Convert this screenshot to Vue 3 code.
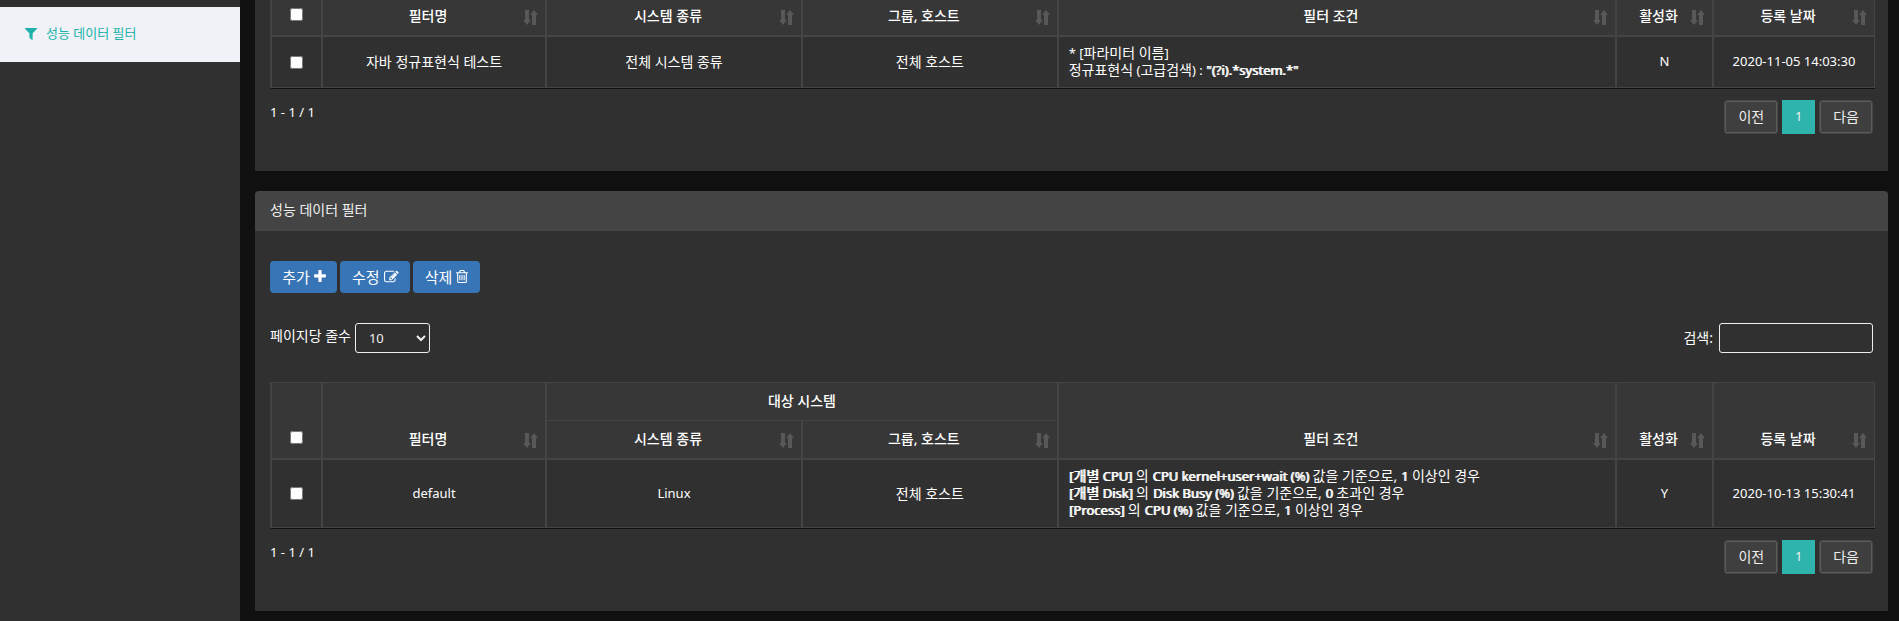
<script setup>
import { ref } from 'vue'

const pageSize = ref('10')
const keyword = ref('')

const columns = ['필터명', '시스템 종류', '그룹, 호스트', '필터 조건', '활성화', '등록 날짜']

const sortPath = 'M2 0h4v10h2l-4 5-4-5h2zM9 15h4V5h2l-4-5-4 5h2z'

const icons = {
  plus: {
    w: 12, h: 13, box: '192 128 1408 1536',
    d: 'M1600 736v192q0 40-28 68t-68 28h-416v416q0 40-28 68t-68 28h-192q-40 0-68-28t-28-68v-416h-416q-40 0-68-28t-28-68v-192q0-40 28-68t68-28h416v-416q0-40 28-68t68-28h192q40 0 68 28t28 68v416h416q40 0 68 28t28 68z'
  },
  edit: {
    w: 15, h: 13, box: '0 132 1824 1404',
    d: 'M888 1184l116-116-152-152-116 116v56h96v96h56zm440-720q-16-16-33 1l-350 350q-17 17-1 33t33-1l350-350q17-17 1-33zm80 594v190q0 119-84.5 203.5t-203.5 84.5h-832q-119 0-203.5-84.5t-84.5-203.5v-832q0-119 84.5-203.5t203.5-84.5h832q63 0 117 25 15 7 18 23 3 17-9 29l-49 49q-14 14-32 8-23-6-45-6h-832q-66 0-113 47t-47 113v832q0 66 47 113t113 47h832q66 0 113-47t47-113v-126q0-13 9-22l64-64q15-15 35-7t20 29zm-96-738l288 288-672 672h-288v-288zm444 132l-92 92-288-288 92-92q28-28 68-28t68 28l152 152q28 28 28 68t-28 68z'
  },
  trash: {
    w: 12, h: 13, box: '192 128 1408 1536',
    d: 'M704 736v576q0 14-9 23t-23 9h-64q-14 0-23-9t-9-23v-576q0-14 9-23t23-9h64q14 0 23 9t9 23zm256 0v576q0 14-9 23t-23 9h-64q-14 0-23-9t-9-23v-576q0-14 9-23t23-9h64q14 0 23 9t9 23zm256 0v576q0 14-9 23t-23 9h-64q-14 0-23-9t-9-23v-576q0-14 9-23t23-9h64q14 0 23 9t9 23zm128 724v-948h-896v948q0 22 7 40.5t14.5 27 10.5 8.5h832q3 0 10.5-8.5t14.5-27 7-40.5zm-672-1076h448l-48-117q-7-9-17-11h-317q-10 2-17 11zm928 32v64q0 14-9 23t-23 9h-96v948q0 83-47 143.5t-113 60.5h-832q-66 0-113-58.5t-47-141.5v-952h-96q-14 0-23-9t-9-23v-64q0-14 9-23t23-9h309l70-167q15-37 54-63t79-26h320q40 0 79 26t54 63l70 167h309q14 0 23 9t9 23z'
  }
}

const actions = [
  { label: '추가', icon: icons.plus },
  { label: '수정', icon: icons.edit },
  { label: '삭제', icon: icons.trash }
]

// k: Korean run, b: bold run
const panels = [
  {
    id: 'parameter',
    grouped: false,
    row: {
      name: '자바 정규표현식 테스트', system: '전체 시스템 종류', host: '전체 호스트', active: 'N', date: '2020-11-05 14:03:30',
      lines: [
        [{ t: '* [' }, { t: '파라미터 이름', k: true }, { t: ']' }],
        [{ t: '정규표현식', k: true }, { t: ' (' }, { t: '고급검색', k: true }, { t: ') : ' }, { t: '"(?i).*system.*"', b: true }]
      ]
    }
  },
  {
    id: 'performance',
    title: '성능 데이터 필터',
    grouped: true,
    row: {
      name: 'default', system: 'Linux', host: '전체 호스트', active: 'Y', date: '2020-10-13 15:30:41',
      lines: [
        [{ t: '[', b: true }, { t: '개별', k: true, b: true }, { t: ' CPU]', b: true }, { t: ' 의 ', k: true }, { t: 'CPU kernel+user+wait (%)', b: true }, { t: ' 값을 기준으로, ', k: true }, { t: '1', b: true }, { t: ' 이상인 경우', k: true }],
        [{ t: '[', b: true }, { t: '개별', k: true, b: true }, { t: ' Disk]', b: true }, { t: ' 의 ', k: true }, { t: 'Disk Busy (%)', b: true }, { t: ' 값을 기준으로, ', k: true }, { t: '0', b: true }, { t: ' 초과인 경우', k: true }],
        [{ t: '[Process]', b: true }, { t: ' 의 ', k: true }, { t: 'CPU (%)', b: true }, { t: ' 값을 기준으로, ', k: true }, { t: '1', b: true }, { t: ' 이상인 경우', k: true }]
      ]
    }
  }
]

const isKorean = (text) => /[가-힣]/.test(text)
</script>

<template>
  <div class="layout">
    <nav class="sidebar">
      <a href="#performance" class="nav-item">
        <svg width="12" height="12" viewBox="192 256 1408 1408" aria-hidden="true">
          <path d="M1595 295q17 41-14 70l-493 493v742q0 42-39 59-13 5-25 5-27 0-45-19l-256-256q-19-19-19-45v-486l-493-493q-31-29-14-70 17-39 59-39h1280q42 0 59 39z" />
        </svg>
        <span>성능 데이터 필터</span>
      </a>
    </nav>

    <main class="content">
      <section v-for="panel in panels" :id="panel.id" :key="panel.id" class="panel">
        <h2 v-if="panel.title" class="panel-title">{{ panel.title }}</h2>
        <div class="panel-body" :class="{ continued: !panel.title }">
          <template v-if="panel.title">
            <div class="actions">
              <button v-for="action in actions" :key="action.label" type="button" class="action">
                <span>{{ action.label }}</span>
                <svg :width="action.icon.w" :height="action.icon.h" :viewBox="action.icon.box" aria-hidden="true">
                  <path :d="action.icon.d" />
                </svg>
              </button>
            </div>
            <div class="controls">
              <div class="length">
                <label for="page-size">페이지당 줄수</label>
                <select id="page-size" v-model="pageSize">
                  <option>10</option>
                  <option>25</option>
                  <option>50</option>
                </select>
              </div>
              <div class="search">
                <label for="keyword">검색:</label>
                <input id="keyword" v-model="keyword" type="text">
              </div>
            </div>
          </template>

          <table :class="{ grouped: panel.grouped }">
            <colgroup>
              <col class="c-check">
              <col class="c-name">
              <col class="c-target">
              <col class="c-target">
              <col>
              <col class="c-active">
              <col class="c-date">
            </colgroup>
            <thead>
              <tr v-if="panel.grouped">
                <th rowspan="2" class="check"><input type="checkbox" aria-label="전체 선택"></th>
                <th rowspan="2">
                  <button type="button" class="sort">
                    <span>{{ columns[0] }}</span>
                    <svg width="15" height="15" viewBox="0 0 15 15" aria-hidden="true"><path :d="sortPath" /></svg>
                  </button>
                </th>
                <th colspan="2" class="group">대상 시스템</th>
                <th v-for="column in columns.slice(3)" :key="column" rowspan="2">
                  <button type="button" class="sort">
                    <span>{{ column }}</span>
                    <svg width="15" height="15" viewBox="0 0 15 15" aria-hidden="true"><path :d="sortPath" /></svg>
                  </button>
                </th>
              </tr>
              <tr>
                <th v-if="!panel.grouped" class="check"><input type="checkbox" aria-label="전체 선택"></th>
                <th v-for="column in panel.grouped ? columns.slice(1, 3) : columns" :key="column">
                  <button type="button" class="sort">
                    <span>{{ column }}</span>
                    <svg width="15" height="15" viewBox="0 0 15 15" aria-hidden="true"><path :d="sortPath" /></svg>
                  </button>
                </th>
              </tr>
            </thead>
            <tbody>
              <tr>
                <td class="check"><input type="checkbox" :aria-label="panel.row.name"></td>
                <td :class="{ ko: isKorean(panel.row.name) }">{{ panel.row.name }}</td>
                <td :class="{ ko: isKorean(panel.row.system) }">{{ panel.row.system }}</td>
                <td class="ko">{{ panel.row.host }}</td>
                <td class="condition">
                  <div v-for="(line, i) in panel.row.lines" :key="i" class="line"><span v-for="(run, j) in line" :key="j" :class="{ ko: run.k, strong: run.b }">{{ run.t }}</span></div>
                </td>
                <td>{{ panel.row.active }}</td>
                <td>{{ panel.row.date }}</td>
              </tr>
            </tbody>
          </table>

          <div class="footer">
            <p class="info">1 - 1 / 1</p>
            <div class="pager">
              <button type="button" class="page">이전</button>
              <button type="button" class="page current" aria-current="page">1</button>
              <button type="button" class="page">다음</button>
            </div>
          </div>
        </div>
      </section>
    </main>
  </div>
</template>

<style>
body {
  margin: 0;
  background: #101010;
}
</style>

<style scoped>
.layout {
  display: flex;
  min-height: 100vh;
  box-sizing: border-box;
  font-family: "Noto Sans", "Noto Sans CJK KR", sans-serif;
  font-size: 13px;
  line-height: 17px;
  color: #fff;
}
button, input, select {
  font-family: inherit;
  box-sizing: border-box;
}
svg {
  flex: none;
  fill: currentColor;
}
.sidebar {
  flex: none;
  width: 240px;
  padding-top: 7px;
  box-sizing: border-box;
  background: #303030;
}
.nav-item {
  display: flex;
  align-items: center;
  gap: 9px;
  height: 55px;
  padding: 0 0 2px 25px;
  box-sizing: border-box;
  background: #f0f2f7;
  color: #20b2aa;
  text-decoration: none;
}
.content {
  flex: 1;
  min-width: 0;
  padding: 0 11px 10px 15px;
}
.panel + .panel {
  margin-top: 20px;
}
.panel-title {
  margin: 0;
  padding: 0 15px 2px;
  border-radius: 4px 4px 0 0;
  background: #444;
  color: #eee;
  font-size: 14px;
  font-weight: 400;
  line-height: 38px;
}
.panel-body {
  padding: 30px 13px 37px 15px;
  background: #303030;
}
.panel-body.continued {
  padding-top: 0;
}
.actions {
  display: flex;
  gap: 3px;
}
.action {
  display: flex;
  align-items: center;
  justify-content: center;
  gap: 4px;
  min-width: 67px;
  height: 32px;
  padding: 0 11px 2px 12px;
  border: 0;
  border-radius: 4px;
  background: #3875b6;
  color: #fff;
  font-size: 15px;
}
.controls {
  display: flex;
  justify-content: space-between;
  margin: 30px 2px 29px 0;
  font-size: 14px;
}
.length, .search {
  display: flex;
  align-items: center;
}
.length {
  gap: 4px;
}
.length label {
  padding-bottom: 6px;
}
.search {
  gap: 6px;
}
.search label {
  padding-bottom: 2px;
}
.length select, .search input {
  height: 30px;
  border: 1px solid #eee;
  border-radius: 3px;
  background: #303030;
  color: #eee;
  font-size: 13px;
}
.length select {
  width: 75px;
  padding: 0 0 0 9px;
}
.search input {
  width: 154px;
  padding: 0 8px;
}
table {
  width: 100%;
  table-layout: fixed;
  border-collapse: separate;
  border-spacing: 0;
  border-left: 1px solid #444;
  border-bottom: 1px solid #111;
}
table.grouped {
  border-top: 1px solid #444;
}
.c-check {
  width: 51px;
}
.c-name {
  width: 13.97%;
}
.c-target {
  width: 15.95%;
}
.c-active {
  width: 97px;
}
.c-date {
  width: 162px;
}
th {
  height: 36px;
  padding: 0 0 9px;
  box-sizing: border-box;
  border: solid #444;
  border-width: 0 1px 1px;
  background: #373737;
  vertical-align: bottom;
  font-size: 14px;
  font-weight: 500;
}
.grouped th {
  height: 38px;
}
th.group {
  padding: 0 0 2px;
  vertical-align: middle;
}
th.check {
  padding-bottom: 14px;
}
.sort {
  display: flex;
  align-items: center;
  width: 100%;
  padding: 0 7px 0 10px;
  border: 0;
  background: none;
  color: #fff;
  font-size: 14px;
  font-weight: 500;
  line-height: 20px;
}
.sort span {
  flex: 1;
  text-align: center;
}
.sort svg {
  margin-top: 2px;
  color: #585858;
}
td {
  padding: 7px 10px 9px;
  border: 1px solid #444;
  text-align: center;
  vertical-align: middle;
}
.grouped td {
  padding: 8px 10px;
}
.grouped td.condition {
  padding: 7px 10px 9px;
}
td.condition {
  text-align: left;
}
.check {
  font-size: 0;
  line-height: 0;
}
table td.check {
  padding: 0;
}
.check input {
  width: 13px;
  height: 13px;
  margin: 0;
}
.ko {
  font-size: 14px;
}
.line {
  height: 17px;
  white-space: pre;
}
.strong {
  text-shadow: 1px 0 currentColor;
}
.footer {
  display: flex;
  justify-content: space-between;
  align-items: flex-start;
  padding: 11px 2px 0 0;
}
.info {
  margin: 4px 0 0;
}
.pager {
  display: flex;
  align-items: center;
  gap: 4px;
}
.page {
  height: 34px;
  padding: 0 13px 2px;
  border: 1px solid #474747;
  border-radius: 3px;
  background: #3f3f3f;
  box-shadow: inset 0 0 0 1px #5b5b5b;
  color: #eee;
  font-size: 14px;
}
.page.current {
  width: 33px;
  padding: 0 0 2px;
  border: 0;
  border-radius: 0;
  background: #2fb3ad;
  box-shadow: none;
  font-size: 13px;
}
</style>
